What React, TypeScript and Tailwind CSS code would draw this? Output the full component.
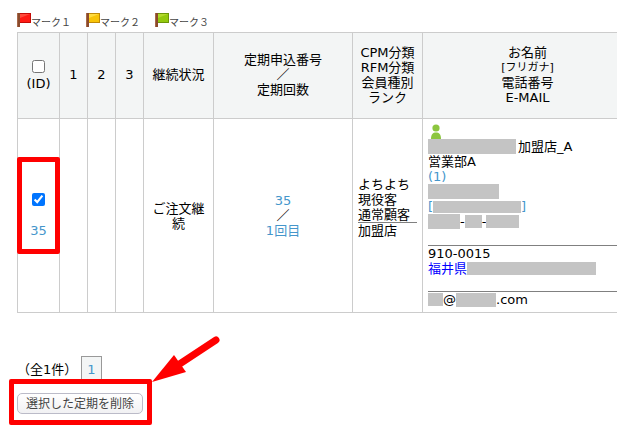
import { clsx } from 'clsx';

const marks = [
  { label: 'マーク１', light: '#ff4a3c', base: '#ff1a14', edge: '#c40a06' },
  { label: 'マーク２', light: '#ffdc40', base: '#f8c408', edge: '#c08a06' },
  { label: 'マーク３', light: '#b2da2c', base: '#93c90e', edge: '#6c9608' },
];

function Flag({ light, base, edge }: { light: string; base: string; edge: string }) {
  return (
    <svg width="14" height="14" viewBox="0 0 14 14" aria-hidden="true">
      <rect x="0" y="0" width="3" height="14" fill="#8a4a2c" />
      <rect x="0" y="0" width="1" height="14" fill="#a8694a" />
      <rect x="3" y="0" width="11" height="10" fill={edge} />
      <rect x="3" y="1" width="10" height="8" fill={base} />
      <path d="M3 1h10L3 5z" fill={light} />
    </svg>
  );
}

function Member() {
  return (
    <svg width="16" height="15" viewBox="0 0 16 15" aria-hidden="true">
      <circle cx="8" cy="4" r="3.6" fill="#8cc63f" />
      <path d="M3 15c0-5 2-6.500 5-6.500s5 1.500 5 6.500z" fill="#8cc63f" />
    </svg>
  );
}

// Grey block hiding personal data
function Mask({ className }: { className: string }) {
  return <span className={clsx('block shrink-0 bg-[#c4c4c4]', className)} />;
}

export default function App() {
  const cell = 'border border-[#ccc] px-[5px] font-normal';
  const head = clsx(cell, 'pt-[5px] pb-[7px]');
  const body = clsx(cell, 'py-[5px]');
  const line = 'flex h-[15px] items-center whitespace-nowrap';
  const link = 'text-[#4596cb]';

  return (
    <main className="overflow-hidden bg-white pt-[13px] pb-[18px] pl-[17px] font-['DejaVu_Sans','Noto_Sans_CJK_JP',sans-serif] text-[13px] leading-[15px] text-black">
      {/* Legend */}
      <ul className="mb-[4px] flex gap-[15px] text-[10px] text-[#444]">
        {marks.map(({ label, ...colors }) => (
          <li key={label} className="flex">
            <Flag {...colors} />
            <span className="pt-[4px] leading-[11px]">{label}</span>
          </li>
        ))}
      </ul>

      <table className="w-[calc(100%+16px)] table-fixed border-collapse text-center">
        <colgroup>
          <col className="w-[42px]" />
          <col className="w-[28px]" />
          <col className="w-[28px]" />
          <col className="w-[28px]" />
          <col className="w-[70px]" />
          <col className="w-[139px]" />
          <col className="w-[70px]" />
          <col />
        </colgroup>
        <thead className="bg-[#f3f5f5]">
          <tr className="h-[86px]">
            <th className={clsx(cell, 'py-[5px]')}>
              <label className="flex flex-col items-center gap-[3px]">
                <input type="checkbox" className="size-[13px]" />
                (ID)
              </label>
            </th>
            <th className={head}>1</th>
            <th className={head}>2</th>
            <th className={head}>3</th>
            <th className={head}>継続状況</th>
            <th className={head}>
              定期申込番号
              <br />
              ／
              <br />
              定期回数
            </th>
            <th className={head}>
              CPM分類
              <br />
              RFM分類
              <br />
              会員種別
              <br />
              ランク
            </th>
            <th className={head}>
              お名前
              <div className="text-[11px]">[フリガナ]</div>
              電話番号
              <br />
              E-MAIL
            </th>
          </tr>
        </thead>
        <tbody>
          <tr className="h-[194px]">
            <td className={clsx(cell, 'relative')}>
              <div className="flex flex-col items-center gap-[17px]">
                <input type="checkbox" defaultChecked aria-label="35を選択" className="size-[13px]" />
                <a href="#35" className={link}>35</a>
              </div>
              <div className="pointer-events-none absolute -inset-x-px top-[38px] h-[97px] rounded-[2px] border-5 border-[#f00]" />
            </td>
            <td className={body} />
            <td className={body} />
            <td className={body} />
            <td className={body}>ご注文継続</td>
            <td className={body}>
              <a href="#35" className={link}>35</a>
              <br />
              ／
              <br />
              <a href="#first" className={link}>1回目</a>
            </td>
            <td className={clsx(body, 'text-left')}>
              <div className="pb-[17px]">
                よちよち
                <br />
                現役客
                <br />
                通常顧客
                <hr className="border-[#808080]" />
                加盟店
              </div>
            </td>
            <td className={clsx(body, 'text-left')}>
              <div className={line}><Member /></div>
              <div className={line}>
                <Mask className="mr-[2px] h-[15px] w-[88px]" />
                加盟店_A
              </div>
              <div className={line}>営業部A</div>
              <div className={line}>
                <a href="#1" className={link}>(1)</a>
              </div>
              <div className={line}><Mask className="h-[15px] w-[71px]" /></div>
              <div className={clsx(line, link)}>
                [<Mask className="h-[12px] w-[88px]" />]
              </div>
              <div className={line}>
                <Mask className="h-[15px] w-[32px]" />-
                <Mask className="h-[13px] w-[17px]" />-
                <Mask className="h-[13px] w-[33px]" />
              </div>
              <hr className="mt-[16px] border-[#808080]" />
              <div className={line}>910-0015</div>
              <div className={line}>
                <a href="#map" className="text-[#00f]">福井県</a>
                <Mask className="h-[13px] w-[129px]" />
              </div>
              <hr className="mt-[15px] border-[#808080]" />
              <div className={line}>
                <Mask className="h-[13px] w-[15px]" />@
                <Mask className="h-[14px] w-[40px]" />.com
              </div>
            </td>
          </tr>
        </tbody>
      </table>

      {/* Pager */}
      <nav className="mt-[43px] flex items-center gap-[4px]">
        （全1件）
        <a href="#page1" className={clsx('border border-[#999] bg-[#f3f5f5] p-[5px]', link)}>1</a>
      </nav>

      <div className="relative mt-[10px] w-fit">
        <button
          type="button"
          className="block h-[21px] w-[126px] rounded-[5px] border border-[#bbbbc8] bg-linear-to-b from-white to-[#f1f1f3] text-[12px] leading-[18px] whitespace-nowrap text-[#444]"
        >
          選択した定期を削除
        </button>
        <div className="pointer-events-none absolute -top-[14px] -right-[9px] -bottom-[11px] -left-[8px] rounded-[2px] border-5 border-[#f00]" />
        <svg
          className="pointer-events-none absolute bottom-full left-full mb-[10px] ml-[9px]"
          width="70"
          height="48"
          viewBox="0 0 70 48"
          aria-hidden="true"
        >
          <path d="M20 34L64 5" stroke="#f00" strokeWidth="7" strokeLinecap="round" />
          <path d="M0 47L22 20L34 37z" fill="#f00" />
        </svg>
      </div>
    </main>
  );
}
